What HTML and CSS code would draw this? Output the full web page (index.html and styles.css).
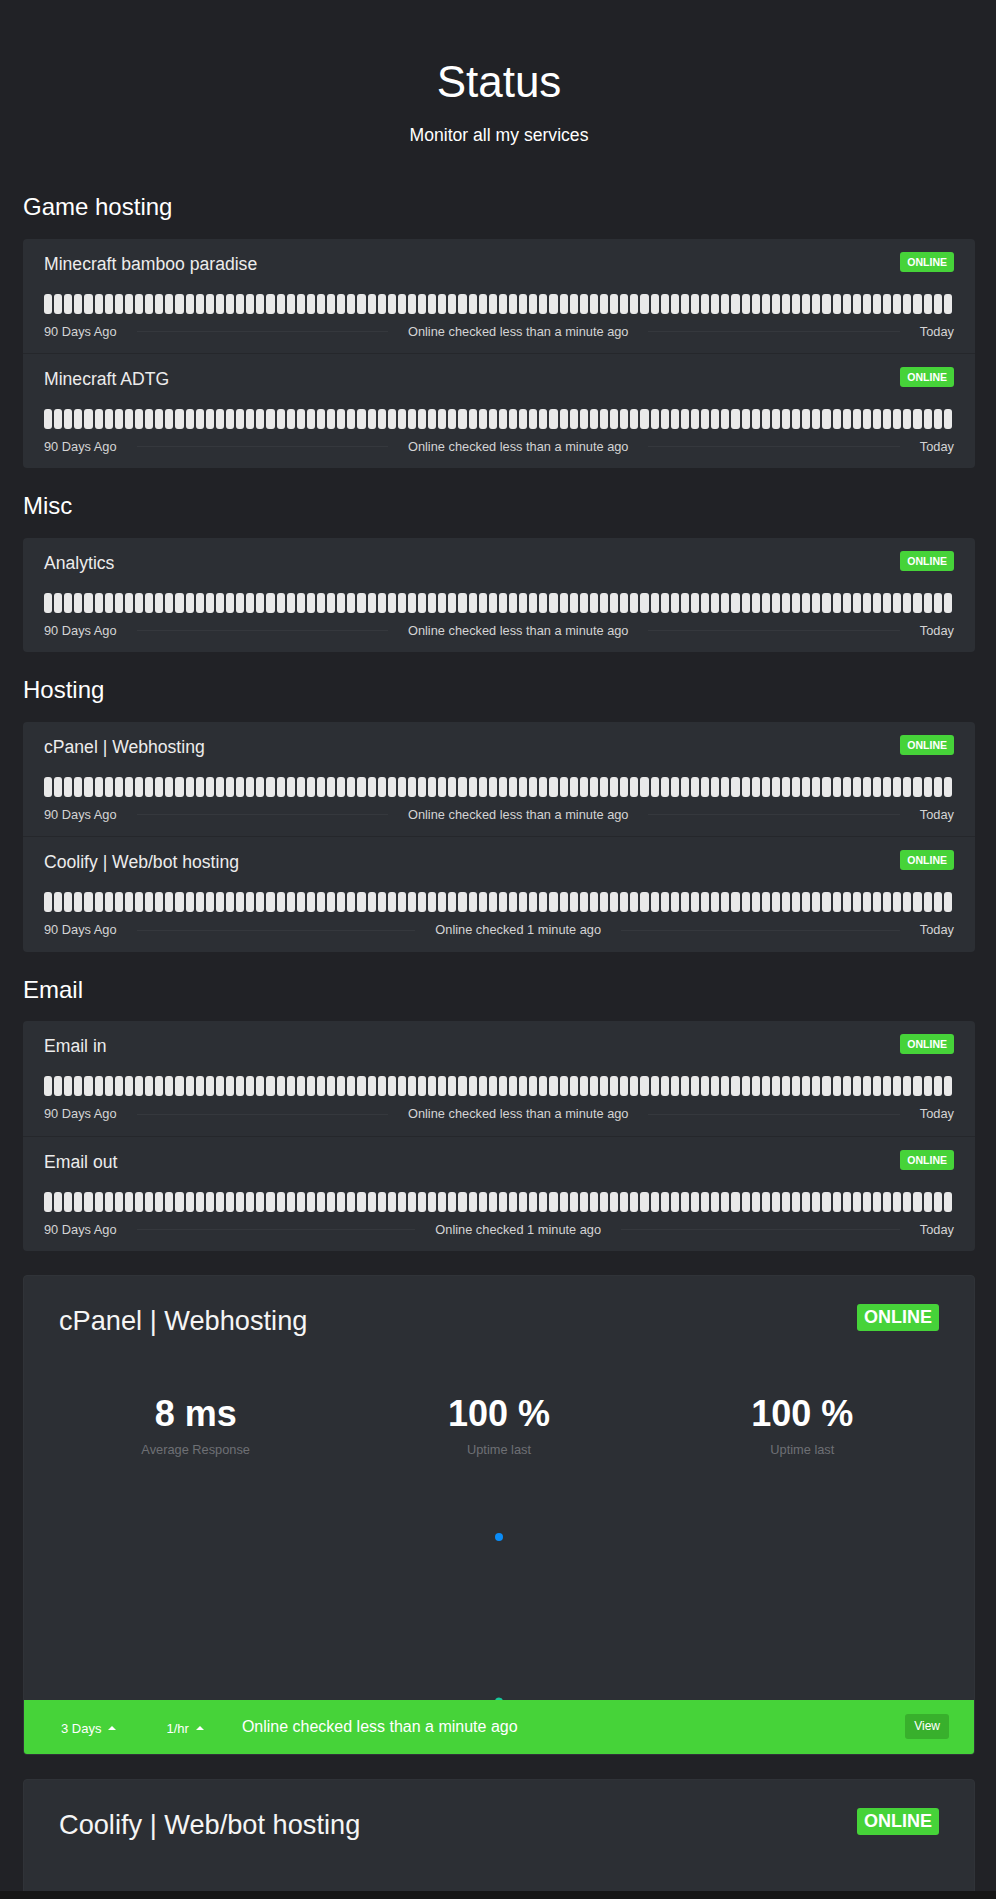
FILE: index.html
```html
<!DOCTYPE html>
<html lang="en">
<head>
<meta charset="utf-8">
<title>Status</title>
<link rel="stylesheet" href="styles.css">
</head>
<body>
<div class="screen">
<main class="page">
  <header class="masthead">
    <h1>Status</h1>
    <p>Monitor all my services</p>
  </header>

  <section class="group">
    <h2 class="group-title">Game hosting</h2>
    <div class="card">
      <div class="service">
        <div class="service-head"><div class="service-name">Minecraft bamboo paradise</div><span class="badge">ONLINE</span></div>
        <div class="bars">
<i></i><i></i><i></i><i></i><i></i><i></i><i></i><i></i><i></i><i></i>
<i></i><i></i><i></i><i></i><i></i><i></i><i></i><i></i><i></i><i></i>
<i></i><i></i><i></i><i></i><i></i><i></i><i></i><i></i><i></i><i></i>
<i></i><i></i><i></i><i></i><i></i><i></i><i></i><i></i><i></i><i></i>
<i></i><i></i><i></i><i></i><i></i><i></i><i></i><i></i><i></i><i></i>
<i></i><i></i><i></i><i></i><i></i><i></i><i></i><i></i><i></i><i></i>
<i></i><i></i><i></i><i></i><i></i><i></i><i></i><i></i><i></i><i></i>
<i></i><i></i><i></i><i></i><i></i><i></i><i></i><i></i><i></i><i></i>
<i></i><i></i><i></i><i></i><i></i><i></i><i></i><i></i><i></i><i></i>
        </div>
        <div class="timeline"><span>90 Days Ago</span><span class="rule"></span><span>Online checked less than a minute ago</span><span class="rule"></span><span>Today</span></div>
      </div>
      <div class="service">
        <div class="service-head"><div class="service-name">Minecraft ADTG</div><span class="badge">ONLINE</span></div>
        <div class="bars">
<i></i><i></i><i></i><i></i><i></i><i></i><i></i><i></i><i></i><i></i>
<i></i><i></i><i></i><i></i><i></i><i></i><i></i><i></i><i></i><i></i>
<i></i><i></i><i></i><i></i><i></i><i></i><i></i><i></i><i></i><i></i>
<i></i><i></i><i></i><i></i><i></i><i></i><i></i><i></i><i></i><i></i>
<i></i><i></i><i></i><i></i><i></i><i></i><i></i><i></i><i></i><i></i>
<i></i><i></i><i></i><i></i><i></i><i></i><i></i><i></i><i></i><i></i>
<i></i><i></i><i></i><i></i><i></i><i></i><i></i><i></i><i></i><i></i>
<i></i><i></i><i></i><i></i><i></i><i></i><i></i><i></i><i></i><i></i>
<i></i><i></i><i></i><i></i><i></i><i></i><i></i><i></i><i></i><i></i>
        </div>
        <div class="timeline"><span>90 Days Ago</span><span class="rule"></span><span>Online checked less than a minute ago</span><span class="rule"></span><span>Today</span></div>
      </div>
    </div>
  </section>

  <section class="group">
    <h2 class="group-title">Misc</h2>
    <div class="card">
      <div class="service">
        <div class="service-head"><div class="service-name">Analytics</div><span class="badge">ONLINE</span></div>
        <div class="bars">
<i></i><i></i><i></i><i></i><i></i><i></i><i></i><i></i><i></i><i></i>
<i></i><i></i><i></i><i></i><i></i><i></i><i></i><i></i><i></i><i></i>
<i></i><i></i><i></i><i></i><i></i><i></i><i></i><i></i><i></i><i></i>
<i></i><i></i><i></i><i></i><i></i><i></i><i></i><i></i><i></i><i></i>
<i></i><i></i><i></i><i></i><i></i><i></i><i></i><i></i><i></i><i></i>
<i></i><i></i><i></i><i></i><i></i><i></i><i></i><i></i><i></i><i></i>
<i></i><i></i><i></i><i></i><i></i><i></i><i></i><i></i><i></i><i></i>
<i></i><i></i><i></i><i></i><i></i><i></i><i></i><i></i><i></i><i></i>
<i></i><i></i><i></i><i></i><i></i><i></i><i></i><i></i><i></i><i></i>
        </div>
        <div class="timeline"><span>90 Days Ago</span><span class="rule"></span><span>Online checked less than a minute ago</span><span class="rule"></span><span>Today</span></div>
      </div>
    </div>
  </section>

  <section class="group">
    <h2 class="group-title">Hosting</h2>
    <div class="card">
      <div class="service">
        <div class="service-head"><div class="service-name">cPanel | Webhosting</div><span class="badge">ONLINE</span></div>
        <div class="bars">
<i></i><i></i><i></i><i></i><i></i><i></i><i></i><i></i><i></i><i></i>
<i></i><i></i><i></i><i></i><i></i><i></i><i></i><i></i><i></i><i></i>
<i></i><i></i><i></i><i></i><i></i><i></i><i></i><i></i><i></i><i></i>
<i></i><i></i><i></i><i></i><i></i><i></i><i></i><i></i><i></i><i></i>
<i></i><i></i><i></i><i></i><i></i><i></i><i></i><i></i><i></i><i></i>
<i></i><i></i><i></i><i></i><i></i><i></i><i></i><i></i><i></i><i></i>
<i></i><i></i><i></i><i></i><i></i><i></i><i></i><i></i><i></i><i></i>
<i></i><i></i><i></i><i></i><i></i><i></i><i></i><i></i><i></i><i></i>
<i></i><i></i><i></i><i></i><i></i><i></i><i></i><i></i><i></i><i></i>
        </div>
        <div class="timeline"><span>90 Days Ago</span><span class="rule"></span><span>Online checked less than a minute ago</span><span class="rule"></span><span>Today</span></div>
      </div>
      <div class="service">
        <div class="service-head"><div class="service-name">Coolify | Web/bot hosting</div><span class="badge">ONLINE</span></div>
        <div class="bars">
<i></i><i></i><i></i><i></i><i></i><i></i><i></i><i></i><i></i><i></i>
<i></i><i></i><i></i><i></i><i></i><i></i><i></i><i></i><i></i><i></i>
<i></i><i></i><i></i><i></i><i></i><i></i><i></i><i></i><i></i><i></i>
<i></i><i></i><i></i><i></i><i></i><i></i><i></i><i></i><i></i><i></i>
<i></i><i></i><i></i><i></i><i></i><i></i><i></i><i></i><i></i><i></i>
<i></i><i></i><i></i><i></i><i></i><i></i><i></i><i></i><i></i><i></i>
<i></i><i></i><i></i><i></i><i></i><i></i><i></i><i></i><i></i><i></i>
<i></i><i></i><i></i><i></i><i></i><i></i><i></i><i></i><i></i><i></i>
<i></i><i></i><i></i><i></i><i></i><i></i><i></i><i></i><i></i><i></i>
        </div>
        <div class="timeline"><span>90 Days Ago</span><span class="rule"></span><span>Online checked 1 minute ago</span><span class="rule"></span><span>Today</span></div>
      </div>
    </div>
  </section>

  <section class="group">
    <h2 class="group-title">Email</h2>
    <div class="card">
      <div class="service">
        <div class="service-head"><div class="service-name">Email in</div><span class="badge">ONLINE</span></div>
        <div class="bars">
<i></i><i></i><i></i><i></i><i></i><i></i><i></i><i></i><i></i><i></i>
<i></i><i></i><i></i><i></i><i></i><i></i><i></i><i></i><i></i><i></i>
<i></i><i></i><i></i><i></i><i></i><i></i><i></i><i></i><i></i><i></i>
<i></i><i></i><i></i><i></i><i></i><i></i><i></i><i></i><i></i><i></i>
<i></i><i></i><i></i><i></i><i></i><i></i><i></i><i></i><i></i><i></i>
<i></i><i></i><i></i><i></i><i></i><i></i><i></i><i></i><i></i><i></i>
<i></i><i></i><i></i><i></i><i></i><i></i><i></i><i></i><i></i><i></i>
<i></i><i></i><i></i><i></i><i></i><i></i><i></i><i></i><i></i><i></i>
<i></i><i></i><i></i><i></i><i></i><i></i><i></i><i></i><i></i><i></i>
        </div>
        <div class="timeline"><span>90 Days Ago</span><span class="rule"></span><span>Online checked less than a minute ago</span><span class="rule"></span><span>Today</span></div>
      </div>
      <div class="service">
        <div class="service-head"><div class="service-name">Email out</div><span class="badge">ONLINE</span></div>
        <div class="bars">
<i></i><i></i><i></i><i></i><i></i><i></i><i></i><i></i><i></i><i></i>
<i></i><i></i><i></i><i></i><i></i><i></i><i></i><i></i><i></i><i></i>
<i></i><i></i><i></i><i></i><i></i><i></i><i></i><i></i><i></i><i></i>
<i></i><i></i><i></i><i></i><i></i><i></i><i></i><i></i><i></i><i></i>
<i></i><i></i><i></i><i></i><i></i><i></i><i></i><i></i><i></i><i></i>
<i></i><i></i><i></i><i></i><i></i><i></i><i></i><i></i><i></i><i></i>
<i></i><i></i><i></i><i></i><i></i><i></i><i></i><i></i><i></i><i></i>
<i></i><i></i><i></i><i></i><i></i><i></i><i></i><i></i><i></i><i></i>
<i></i><i></i><i></i><i></i><i></i><i></i><i></i><i></i><i></i><i></i>
        </div>
        <div class="timeline"><span>90 Days Ago</span><span class="rule"></span><span>Online checked 1 minute ago</span><span class="rule"></span><span>Today</span></div>
      </div>
    </div>
  </section>

  <article class="detail">
    <div class="detail-body">
      <div class="detail-head"><h3 class="detail-name">cPanel | Webhosting</h3><span class="badge badge-lg">ONLINE</span></div>
      <div class="stats">
        <div class="stat"><div class="stat-value">8 ms</div><div class="stat-label">Average Response</div></div>
        <div class="stat"><div class="stat-value">100 %</div><div class="stat-label">Uptime last</div></div>
        <div class="stat"><div class="stat-value">100 %</div><div class="stat-label">Uptime last</div></div>
      </div>
      <div class="chart">
        <svg aria-hidden="true"><circle cx="50%" cy="77" r="4" fill="#0a8cf7"/><circle cx="50%" cy="241.5" r="4" fill="#16c99a"/></svg>
      </div>
    </div>
    <div class="detail-foot">
      <span class="pick">3 Days<b class="caret"></b></span>
      <span class="pick pick-rate">1/hr<b class="caret"></b></span>
      <span class="checked">Online checked less than a minute ago</span>
      <span class="view">View</span>
    </div>
  </article>

  <article class="detail">
    <div class="detail-body">
      <div class="detail-head"><h3 class="detail-name">Coolify | Web/bot hosting</h3><span class="badge badge-lg">ONLINE</span></div>
      <div class="detail-rest"></div>
    </div>
  </article>
</main>
<div class="bottom-strip"></div>
</div>
</body>
</html>
```
FILE: styles.css
```css
* { box-sizing: border-box; }

html, body { margin: 0; }

body {
  background: #212226;
  color: #fff;
  font-family: "Liberation Sans", Arial, sans-serif;
}

.screen {
  height: 100vh;
  display: flex;
  flex-direction: column;
}

.page {
  flex: 1;
  overflow: hidden;
  padding: 56px 21px 0 23px;
}

.bottom-strip {
  flex: none;
  height: 8px;
  background: #161616;
}

.masthead {
  text-align: center;
  margin-bottom: 45px;
}

.masthead h1 {
  font-size: 44px;
  font-weight: 400;
  line-height: 1.2;
  margin: 0;
}

.masthead p {
  font-size: 17.6px;
  line-height: 26.4px;
  margin: 13px 0 0;
}

.group-title {
  font-size: 24px;
  font-weight: 400;
  line-height: 28.8px;
  margin: 0 0 17px;
}

.card {
  background: #2c2f34;
  border-radius: 4px;
  margin-bottom: 24px;
}

.service {
  padding: 13px 21px 12px;
  border-bottom: 1px solid #25272b;
}

.service:last-child { border-bottom: 0; }

.service-head {
  display: flex;
  justify-content: space-between;
  align-items: flex-start;
}

.service-name {
  font-size: 17.6px;
  line-height: 21px;
  margin-top: 2px;
  color: #ececec;
}

.badge {
  background: #46d339;
  color: #fff;
  font-weight: 700;
  font-size: 10.5px;
  height: 20px;
  line-height: 20px;
  padding: 0 7px;
  border-radius: 3px;
}

.bars {
  display: flex;
  height: 20px;
  margin-top: 19px;
}

.bars i {
  flex: 1;
  margin-right: 2px;
  background: #e9e9e9;
  border-radius: 3px;
}

.timeline {
  display: flex;
  align-items: center;
  margin-top: 8px;
  font-size: 12.8px;
  line-height: 19.2px;
  color: #d4d4d4;
}

.rule {
  flex: 1;
  height: 1px;
  margin: 0 20px;
  background: #35383d;
}

.detail {
  background: #2c2f34;
  border: 1px solid #303338;
  border-radius: 4px;
  margin-bottom: 24px;
  overflow: hidden;
}

.detail-body {
  padding: 28px 35px 0;
}

.detail-head {
  display: flex;
  justify-content: space-between;
  align-items: flex-start;
}

.detail-name {
  font-size: 27.2px;
  font-weight: 400;
  line-height: 32.6px;
  margin: 1px 0 0;
  color: #f5f5f5;
}

.badge-lg {
  font-size: 18px;
  height: 27px;
  line-height: 27px;
  padding: 0 7px;
}

.detail-rest {
  height: 360px;
}

.stats {
  display: flex;
  margin: 55px -15px 0;
  text-align: center;
}

.stat {
  flex: 1;
  padding: 0 15px;
}

.stat-value {
  font-size: 36px;
  font-weight: 700;
  line-height: 43px;
}

.stat-label {
  font-size: 12.8px;
  line-height: 19.2px;
  margin-top: 5px;
  color: #6e7074;
}

.chart {
  height: 240px;
  overflow: hidden;
}

.chart svg {
  display: block;
  width: 100%;
  height: 100%;
}

.detail-foot {
  display: flex;
  align-items: center;
  height: 54px;
  padding: 0 25px 0 37px;
  background: #46d339;
  color: #fff;
}

.pick {
  font-size: 13px;
  line-height: 19.5px;
  margin-top: 5px;
}

.pick-rate { margin-left: 50px; }

.caret {
  display: inline-block;
  width: 0;
  height: 0;
  margin-left: 7px;
  vertical-align: 0.255em;
  border-left: 4px solid transparent;
  border-right: 4px solid transparent;
  border-bottom: 4px solid #fff;
}

.checked {
  font-size: 16px;
  line-height: 24px;
  margin-left: 38px;
}

.view {
  margin-left: auto;
  height: 25px;
  line-height: 25px;
  padding: 0 9px;
  font-size: 12px;
  background: #38b02c;
  border-radius: 3px;
}
```
